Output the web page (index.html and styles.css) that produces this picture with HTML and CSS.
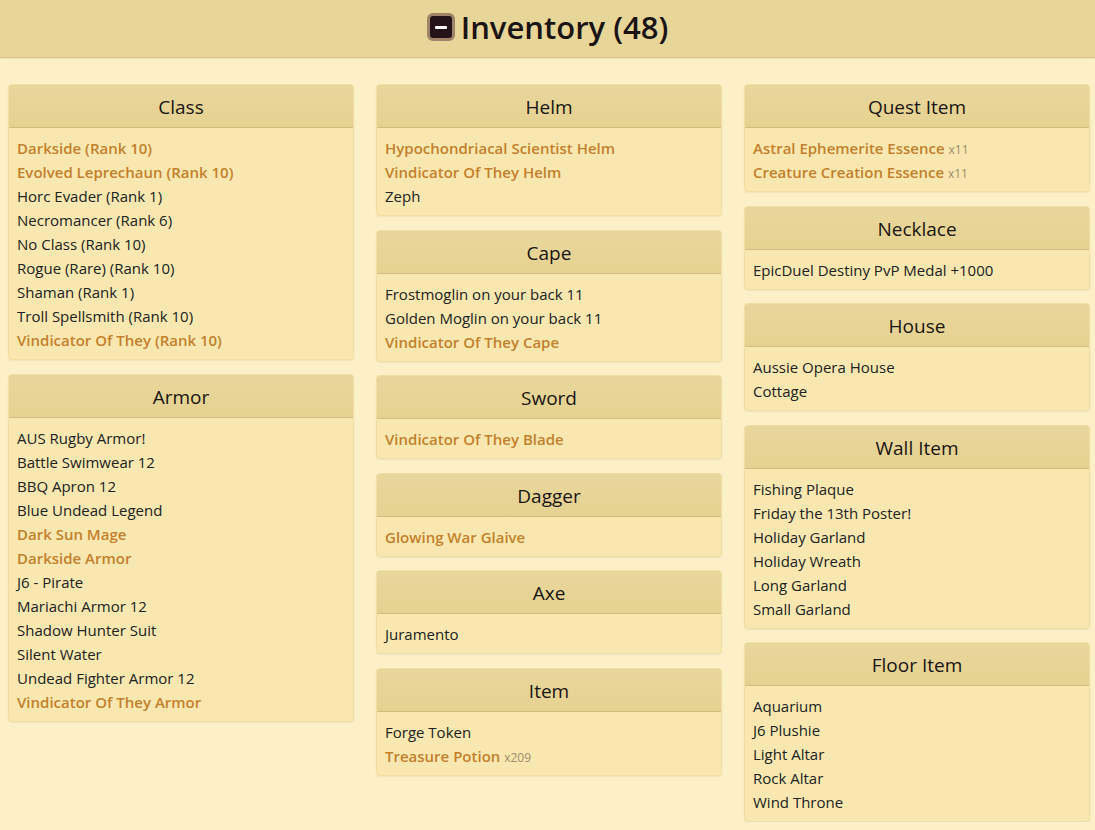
FILE: index.html
```html
<!DOCTYPE html>
<html lang="en">
<head>
<meta charset="utf-8"/>
<title>Inventory</title>
<link rel="stylesheet" href="styles.css">
</head>
<body>
<header class="top">
  <h1><span class="toggle"><span></span></span>Inventory (48)</h1>
</header>

<main class="columns">
  <div class="col">
    <section class="box">
      <h2>Class</h2>
      <ul>
        <li class="rare">Darkside (Rank 10)</li>
        <li class="rare">Evolved Leprechaun (Rank 10)</li>
        <li>Horc Evader (Rank 1)</li>
        <li>Necromancer (Rank 6)</li>
        <li>No Class (Rank 10)</li>
        <li>Rogue (Rare) (Rank 10)</li>
        <li>Shaman (Rank 1)</li>
        <li>Troll Spellsmith (Rank 10)</li>
        <li class="rare">Vindicator Of They (Rank 10)</li>
      </ul>
    </section>
    <section class="box">
      <h2>Armor</h2>
      <ul>
        <li>AUS Rugby Armor!</li>
        <li>Battle Swimwear 12</li>
        <li>BBQ Apron 12</li>
        <li>Blue Undead Legend</li>
        <li class="rare">Dark Sun Mage</li>
        <li class="rare">Darkside Armor</li>
        <li>J6 - Pirate</li>
        <li>Mariachi Armor 12</li>
        <li>Shadow Hunter Suit</li>
        <li>Silent Water</li>
        <li>Undead Fighter Armor 12</li>
        <li class="rare">Vindicator Of They Armor</li>
      </ul>
    </section>
  </div>

  <div class="col">
    <section class="box">
      <h2>Helm</h2>
      <ul>
        <li class="rare">Hypochondriacal Scientist Helm</li>
        <li class="rare">Vindicator Of They Helm</li>
        <li>Zeph</li>
      </ul>
    </section>
    <section class="box">
      <h2>Cape</h2>
      <ul>
        <li>Frostmoglin on your back 11</li>
        <li>Golden Moglin on your back 11</li>
        <li class="rare">Vindicator Of They Cape</li>
      </ul>
    </section>
    <section class="box">
      <h2>Sword</h2>
      <ul>
        <li class="rare">Vindicator Of They Blade</li>
      </ul>
    </section>
    <section class="box">
      <h2>Dagger</h2>
      <ul>
        <li class="rare">Glowing War Glaive</li>
      </ul>
    </section>
    <section class="box">
      <h2>Axe</h2>
      <ul>
        <li>Juramento</li>
      </ul>
    </section>
    <section class="box">
      <h2>Item</h2>
      <ul>
        <li>Forge Token</li>
        <li class="rare">Treasure Potion <small>x209</small></li>
      </ul>
    </section>
  </div>

  <div class="col">
    <section class="box">
      <h2>Quest Item</h2>
      <ul>
        <li class="rare">Astral Ephemerite Essence <small>x11</small></li>
        <li class="rare">Creature Creation Essence <small>x11</small></li>
      </ul>
    </section>
    <section class="box">
      <h2>Necklace</h2>
      <ul>
        <li>EpicDuel Destiny PvP Medal +1000</li>
      </ul>
    </section>
    <section class="box">
      <h2>House</h2>
      <ul>
        <li>Aussie Opera House</li>
        <li>Cottage</li>
      </ul>
    </section>
    <section class="box">
      <h2>Wall Item</h2>
      <ul>
        <li>Fishing Plaque</li>
        <li>Friday the 13th Poster!</li>
        <li>Holiday Garland</li>
        <li>Holiday Wreath</li>
        <li>Long Garland</li>
        <li>Small Garland</li>
      </ul>
    </section>
    <section class="box">
      <h2>Floor Item</h2>
      <ul>
        <li>Aquarium</li>
        <li>J6 Plushie</li>
        <li>Light Altar</li>
        <li>Rock Altar</li>
        <li>Wind Throne</li>
      </ul>
    </section>
  </div>
</main>
</body>
</html>
```

FILE: styles.css
```css
body {
  margin: 0;
  background: #fdf0c8;
  font-family: 'Open Sans', 'Noto Sans', sans-serif;
  color: #222;
}
.top {
  background: #e8d598;
  border-bottom: 1px solid #d6c182;
  box-shadow: 0 1px 2px #0001;
  height: 57px;
  display: flex;
  align-items: center;
  justify-content: center;
}
.top h1 {
  margin: 0 0 3px;
  font-size: 31px;
  font-weight: 600;
  color: #1a1414;
  display: flex;
  align-items: center;
  gap: 6px;
}
.toggle {
  width: 22px;
  height: 22px;
  background: #24141a;
  border: 3px solid #a08468;
  border-radius: 6px;
  display: flex;
  align-items: center;
  justify-content: center;
}
.toggle span {
  width: 12px;
  height: 3px;
  background: #fff;
  border-radius: 1px;
}
.columns {
  display: grid;
  grid-template-columns: repeat(3, 346px);
  gap: 22px;
  padding: 26px 5px 0 8px;
  align-items: start;
}
.col {
  display: flex;
  flex-direction: column;
  gap: 13.5px;
}
.box {
  background: #f8e8b0;
  border: 1px solid #f0dea2;
  border-radius: 4px;
  box-shadow: 0 1px 2px #0000000f;
  overflow: hidden;
}
.box h2 {
  margin: 0;
  height: 42px;
  line-height: 44px;
  text-align: center;
  font-size: 19px;
  font-weight: 500;
  color: #1a1414;
  background: linear-gradient(#e9d69b, #e6d290);
  border-bottom: 1px solid #d4bc80;
}
.box ul {
  list-style: none;
  margin: 0;
  padding: 8px 8px 7px;
}
.box li {
  font-size: 15px;
  line-height: 24px;
  height: 24px;
  white-space: nowrap;
}
.box li.rare {
  color: #c47f2c;
  font-weight: 600;
}
.box li small {
  color: #a08c68;
  font-weight: 400;
  font-size: 12px;
  line-height: 1;
}
```
